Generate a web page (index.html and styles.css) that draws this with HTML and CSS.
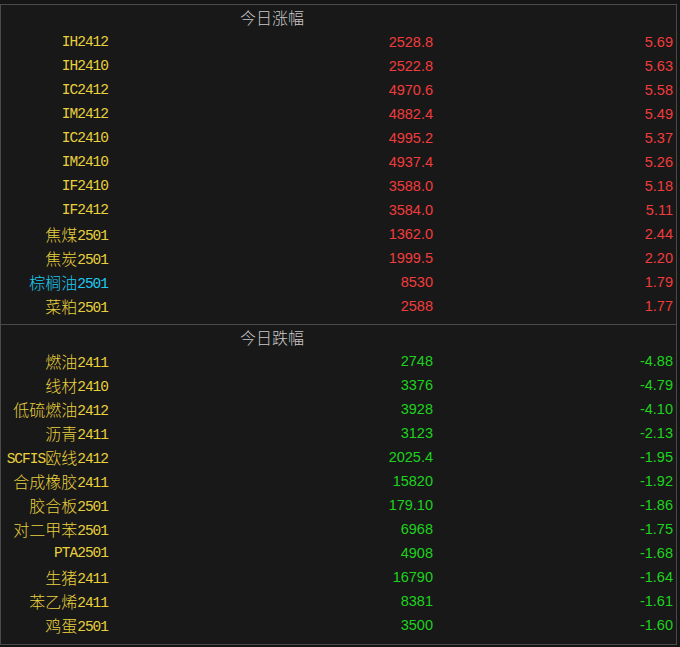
FILE: index.html
```html
<!DOCTYPE html>
<html lang="zh-CN">
<head>
  <meta charset="UTF-8" />
  <title>今日涨跌幅</title>
  <link rel="stylesheet" href="styles.css">
</head>
<body>
  <div class="board">
    <!-- 涨幅 -->
    <section class="block up">
      <div class="block-title">今日涨幅</div>
      <div class="row"><span class="name">IH2412</span><span class="price">2528.8</span><span class="pct">5.69</span></div>
      <div class="row"><span class="name">IH2410</span><span class="price">2522.8</span><span class="pct">5.63</span></div>
      <div class="row"><span class="name">IC2412</span><span class="price">4970.6</span><span class="pct">5.58</span></div>
      <div class="row"><span class="name">IM2412</span><span class="price">4882.4</span><span class="pct">5.49</span></div>
      <div class="row"><span class="name">IC2410</span><span class="price">4995.2</span><span class="pct">5.37</span></div>
      <div class="row"><span class="name">IM2410</span><span class="price">4937.4</span><span class="pct">5.26</span></div>
      <div class="row"><span class="name">IF2410</span><span class="price">3588.0</span><span class="pct">5.18</span></div>
      <div class="row"><span class="name">IF2412</span><span class="price">3584.0</span><span class="pct">5.11</span></div>
      <div class="row"><span class="name"><i>焦煤</i>2501</span><span class="price">1362.0</span><span class="pct">2.44</span></div>
      <div class="row"><span class="name"><i>焦炭</i>2501</span><span class="price">1999.5</span><span class="pct">2.20</span></div>
      <div class="row"><span class="name hot"><i>棕榈油</i>2501</span><span class="price">8530</span><span class="pct">1.79</span></div>
      <div class="row"><span class="name"><i>菜粕</i>2501</span><span class="price">2588</span><span class="pct">1.77</span></div>
    </section>
    <!-- 跌幅 -->
    <section class="block down">
      <div class="block-title">今日跌幅</div>
      <div class="row"><span class="name"><i>燃油</i>2411</span><span class="price">2748</span><span class="pct">-4.88</span></div>
      <div class="row"><span class="name"><i>线材</i>2410</span><span class="price">3376</span><span class="pct">-4.79</span></div>
      <div class="row"><span class="name"><i>低硫燃油</i>2412</span><span class="price">3928</span><span class="pct">-4.10</span></div>
      <div class="row"><span class="name"><i>沥青</i>2411</span><span class="price">3123</span><span class="pct">-2.13</span></div>
      <div class="row"><span class="name">SCFIS<i>欧线</i>2412</span><span class="price">2025.4</span><span class="pct">-1.95</span></div>
      <div class="row"><span class="name"><i>合成橡胶</i>2411</span><span class="price">15820</span><span class="pct">-1.92</span></div>
      <div class="row"><span class="name"><i>胶合板</i>2501</span><span class="price">179.10</span><span class="pct">-1.86</span></div>
      <div class="row"><span class="name"><i>对二甲苯</i>2501</span><span class="price">6968</span><span class="pct">-1.75</span></div>
      <div class="row"><span class="name">PTA2501</span><span class="price">4908</span><span class="pct">-1.68</span></div>
      <div class="row"><span class="name"><i>生猪</i>2411</span><span class="price">16790</span><span class="pct">-1.64</span></div>
      <div class="row"><span class="name"><i>苯乙烯</i>2411</span><span class="price">8381</span><span class="pct">-1.61</span></div>
      <div class="row"><span class="name"><i>鸡蛋</i>2501</span><span class="price">3500</span><span class="pct">-1.60</span></div>
    </section>
  </div>
</body>
</html>
```

FILE: styles.css
```css
* { box-sizing: border-box; margin: 0; padding: 0; }
body {
  background: #151515;
  width: 680px;
  height: 647px;
  overflow: hidden;
  padding-top: 4px;
  font-family: "Liberation Sans", "Noto Sans CJK SC", sans-serif;
}
.board {
  width: 677px;
  height: 641px;
  background: #181818;
  border: 1px solid #4a4a4a;
}
.block { padding-bottom: 6px; }
.block.up { border-bottom: 1px solid #4a4a4a; }
.block-title {
  height: 24px;
  line-height: 24px;
  padding-left: 239px;
  color: #c8c8c8;
  font-family: "Noto Sans CJK SC", sans-serif;
  font-size: 16px;
  font-weight: 300;
}
.up .block-title { height: 25px; line-height: 25px; }
.row {
  display: grid;
  grid-template-columns: 107px 325px 240px;
  height: 24px;
  line-height: 24px;
  text-align: right;
}
.name {
  color: #e8d03c;
  font-family: "Liberation Mono", "Noto Sans CJK SC", monospace;
  font-size: 14.5px;
  letter-spacing: -1px;
  white-space: nowrap;
}
.name i {
  font-style: normal;
  font-family: "Noto Sans CJK SC", sans-serif;
  font-size: 16px;
  font-weight: 300;
  letter-spacing: 0;
  vertical-align: -1px;
}
.name.hot { color: #1ec8f0; }
.price, .pct { font-size: 14.5px; }
.up .price, .up .pct { color: #f03c3c; }
.down .price, .down .pct { color: #1ed21e; }
```
